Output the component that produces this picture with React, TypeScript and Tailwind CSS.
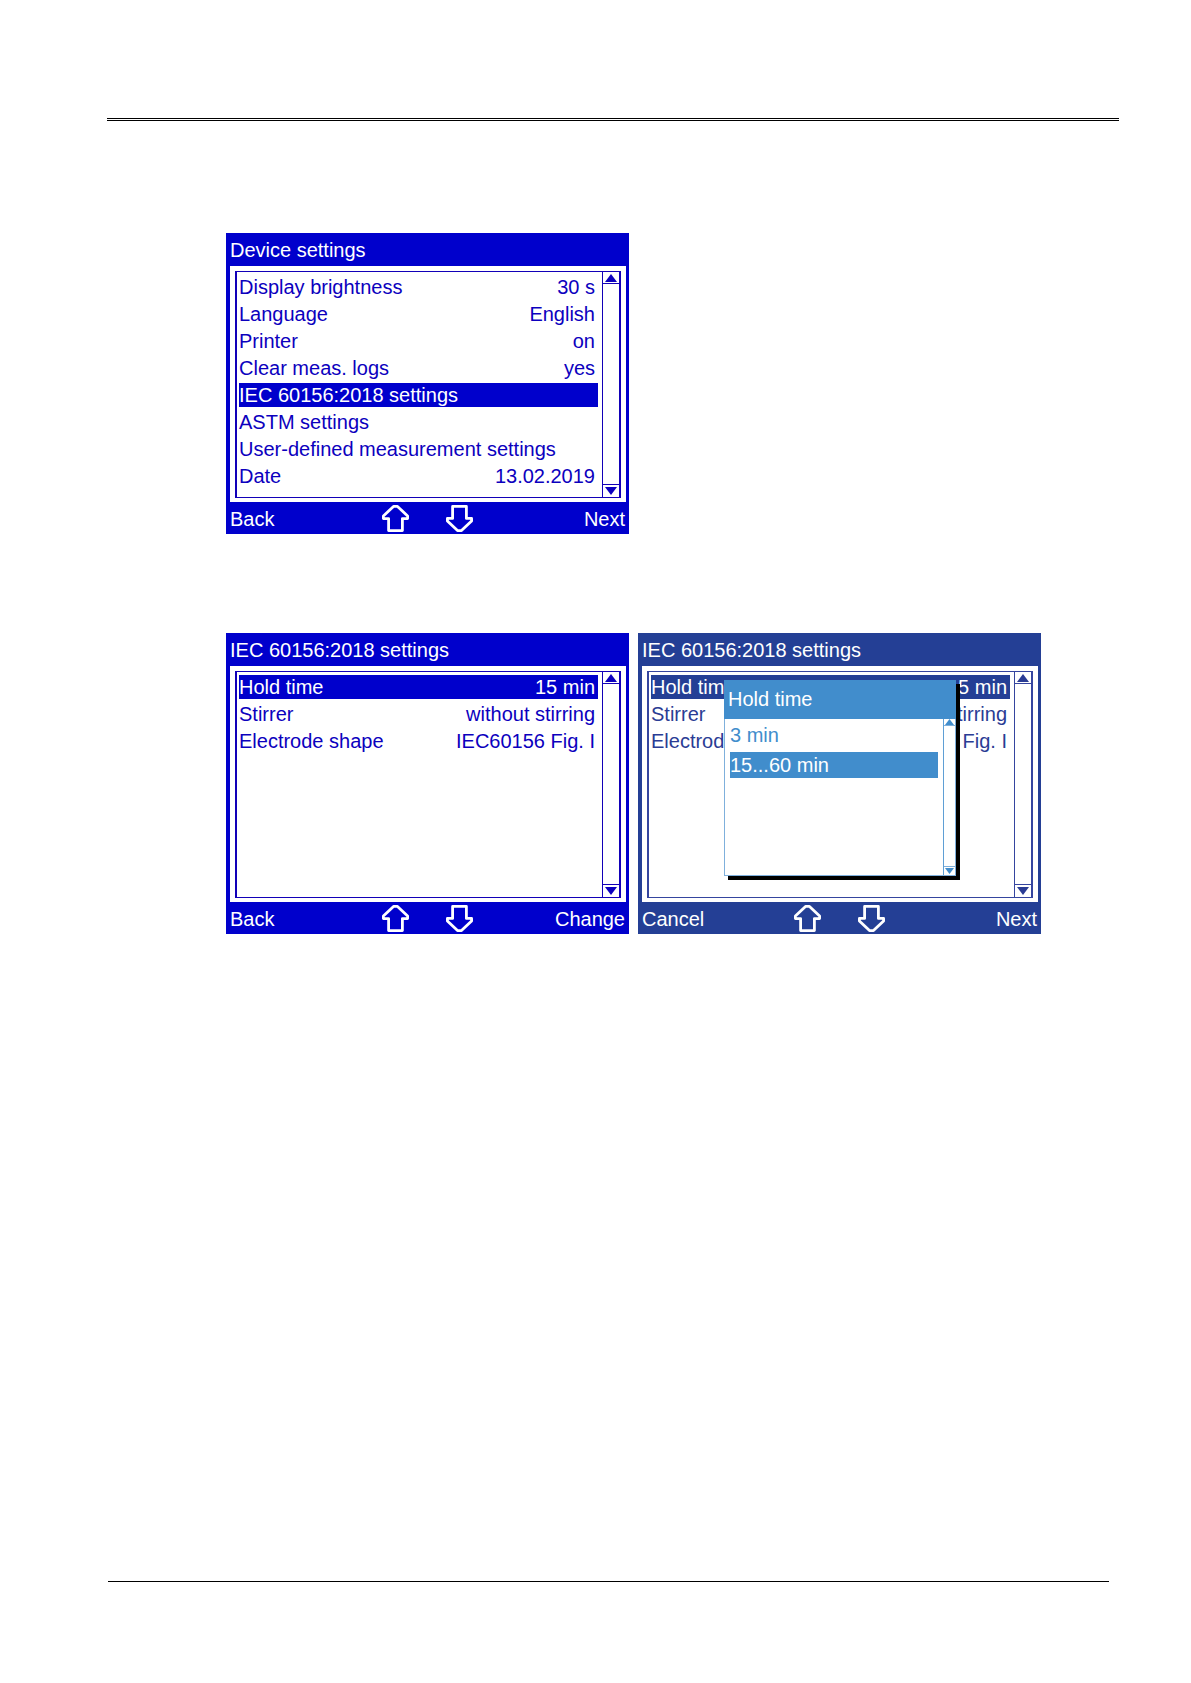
import React, { useState } from "react";

type Item = {
  label: string;
  value?: string;
};

type Theme = {
  bg: string;
  text: string;
  border: string;
};

type ScreenProps = {
  title: string;
  items: Item[];
  initial: number;
  theme: Theme;
  left: string;
  right: string;
  children?: React.ReactNode;
};

const blue: Theme = {
  bg: "bg-[#0000cc]",
  text: "text-[#0c00be]",
  border: "border-[#1200b8]",
};

const dimmed: Theme = {
  bg: "bg-[#243f95]",
  text: "text-[#2a3c94]",
  border: "border-[#35459f]",
};

const deviceItems: Item[] = [
  { label: "Display brightness", value: "30 s" },
  { label: "Language", value: "English" },
  { label: "Printer", value: "on" },
  { label: "Clear meas. logs", value: "yes" },
  { label: "IEC 60156:2018 settings" },
  { label: "ASTM settings" },
  { label: "User-defined measurement settings" },
  { label: "Date", value: "13.02.2019" },
];

const iecItems: Item[] = [
  { label: "Hold time", value: "15 min" },
  { label: "Stirrer", value: "without stirring" },
  { label: "Electrode shape", value: "IEC60156 Fig. I" },
];

const holdTimes = ["3 min", "15...60 min"];

function ArrowIcon({ down = false }: { down?: boolean }) {
  return (
    <svg
      viewBox="0 0 27 27"
      className={`block size-[27px] ${down ? "rotate-180" : ""}`}
      fill="none"
      stroke="currentColor"
      strokeWidth="2.8"
      strokeLinejoin="round"
    >
      <path d="M11.5 1.4 H15.5 L25.6 11 V13.6 H20.4 V25.6 H6.6 V13.6 H1.4 V11 Z" />
    </svg>
  );
}

function Triangle({ down = false, small = false }: { down?: boolean; small?: boolean }) {
  return (
    <svg
      viewBox="0 0 12 8"
      className={`block ${small ? "h-[6px] w-[9px]" : "h-2 w-3"} ${down ? "rotate-180" : ""}`}
      fill="currentColor"
    >
      <path d="M6 0 L12 8 H0 Z" />
    </svg>
  );
}

function Screen({ title, items, initial, theme, left, right, children }: ScreenProps) {
  const [selected, setSelected] = useState<number>(initial);

  return (
    <section className={`relative flex w-full max-w-[403px] flex-col ${theme.bg} text-xl/6 text-white`}>
      <h2 className="px-1 pt-[5px] pb-1">{title}</h2>

      <div className="mr-[3px] ml-1 bg-white px-[5px] pt-[5px] pb-1">
        <div className={`flex min-h-[227px] border-x-2 border-y ${theme.border} ${theme.text}`}>
          <ul className="flex flex-1 flex-col gap-[3px] pt-[3px] pr-1 pl-[2px]">
            {items.map((item, i) => (
              <li key={item.label}>
                <button
                  className={`flex w-full justify-between pr-[3px] text-left ${
                    i === selected ? `${theme.bg} text-white` : ""
                  }`}
                  onClick={() => setSelected(i)}
                >
                  <span>{item.label}</span>
                  <span>{item.value}</span>
                </button>
              </li>
            ))}
          </ul>
          {/* scrollbar */}
          <div className={`flex w-[17px] flex-col justify-between border-l ${theme.border}`}>
            <button
              aria-label="Scroll up"
              className={`flex h-3 items-center justify-center border-b ${theme.border}`}
            >
              <Triangle />
            </button>
            <button
              aria-label="Scroll down"
              className={`flex h-[13px] items-center justify-center border-t ${theme.border}`}
            >
              <Triangle down />
            </button>
          </div>
        </div>
      </div>

      {/* softkeys */}
      <div className="grid grid-cols-[1fr_auto_1fr] items-center px-1">
        <button className="pt-[5px] pb-[3px] text-left">{left}</button>
        <div className="flex gap-[37px]">
          <button
            aria-label="Up"
            onClick={() => setSelected((prev) => Math.max(prev - 1, 0))}
          >
            <ArrowIcon />
          </button>
          <button
            aria-label="Down"
            onClick={() => setSelected((prev) => Math.min(prev + 1, items.length - 1))}
          >
            <ArrowIcon down />
          </button>
        </div>
        <button className="pt-[5px] pb-[3px] text-right">{right}</button>
      </div>

      {children}
    </section>
  );
}

function HoldTimePopup() {
  const [selected, setSelected] = useState<number>(1);

  return (
    <div className="absolute top-[47px] left-[86px] flex h-[196px] w-[232px] flex-col border border-[#7fb0dc] bg-white text-[#418dcc] shadow-[4px_4px_0_0_#000]">
      <h3 className="-mx-px -mt-px bg-[#418dcc] px-1 pt-[7px] pb-2 text-white">Hold time</h3>
      <div className="flex flex-1">
        <ul className="flex flex-1 flex-col gap-1 pt-[3px] pr-[5px] pl-[5px] leading-[26px]">
          {holdTimes.map((time, i) => (
            <li key={time}>
              <button
                className={`block w-full text-left ${i === selected ? "bg-[#418dcc] text-white" : ""}`}
                onClick={() => setSelected(i)}
              >
                {time}
              </button>
            </li>
          ))}
        </ul>
        <div className="flex w-3 flex-col justify-between border-l border-[#5f9fd5]">
          <button
            aria-label="Scroll up"
            className="flex h-[7px] items-center justify-center border-b border-[#7fb0dc]"
          >
            <Triangle small />
          </button>
          <button
            aria-label="Scroll down"
            className="flex h-[9px] items-center justify-center border-t border-[#7fb0dc]"
          >
            <Triangle small down />
          </button>
        </div>
      </div>
    </div>
  );
}

function App() {
  return (
    <div className="flex min-h-screen flex-col bg-white pt-[118px] pb-[101px] font-['Liberation_Sans',Arial,sans-serif]">
      <hr className="mr-[72px] ml-[107px] border-t-3 border-double border-black" />

      <main className="flex flex-1 flex-col gap-[99px] pt-28 pl-[226px]">
        <Screen
          title="Device settings"
          items={deviceItems}
          initial={4}
          theme={blue}
          left="Back"
          right="Next"
        />
        <div className="flex gap-[9px]">
          <Screen
            title="IEC 60156:2018 settings"
            items={iecItems}
            initial={0}
            theme={blue}
            left="Back"
            right="Change"
          />
          <Screen
            title="IEC 60156:2018 settings"
            items={iecItems}
            initial={0}
            theme={dimmed}
            left="Cancel"
            right="Next"
          >
            <HoldTimePopup />
          </Screen>
        </div>
      </main>

      <hr className="mr-[82px] ml-[108px] border-t border-black" />
    </div>
  );
}

export default App;
